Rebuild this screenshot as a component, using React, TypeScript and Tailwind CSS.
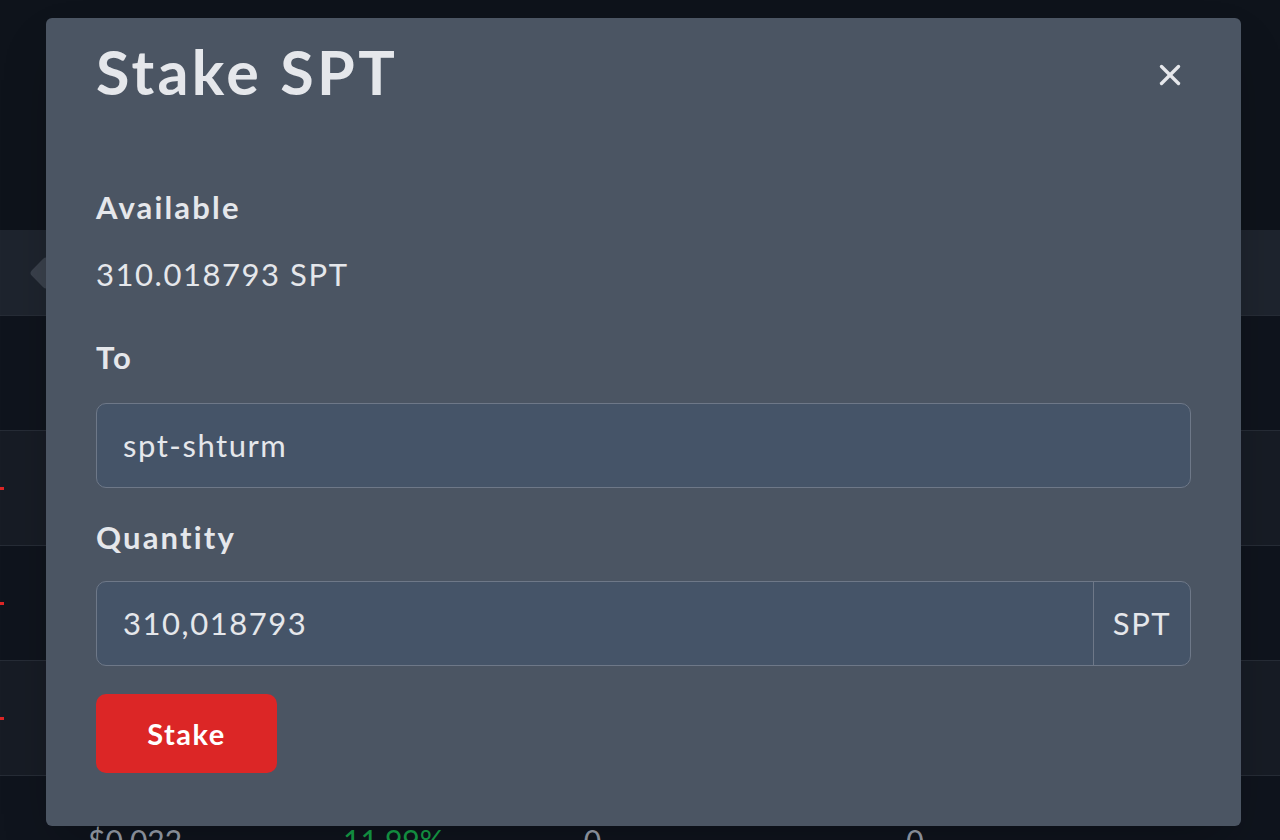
import { X } from "lucide-react";

const font = { fontFamily: "Lato, 'Open Sans', sans-serif" };

const Row = ({ light, tick }: { light?: boolean; tick?: boolean }) => {
  return (
    <div
      className={`flex h-[115px] items-center border-t border-[#262c36] ${
        light ? "bg-[#171c25]" : "bg-[#0f141d]"
      }`}
    >
      {tick && <span className="h-[3px] w-[4px] bg-[#dc2626]" />}
    </div>
  );
};

const StakeModal = () => {
  return (
    <div className="absolute left-[46px] top-[18px] flex h-[808px] w-[1195px] flex-col rounded-md bg-[#4b5563] pl-[50px] pr-[50px] pt-[24px] text-[#e5e7eb] shadow-2xl">
      <div className="flex items-center justify-between">
        <h2 className="text-[61px] font-bold leading-[60px] tracking-[0.055em]">Stake SPT</h2>
        <button className="mr-[4px] mt-[6px] text-[#e5e7eb]">
          <X size={34} strokeWidth={2.4} />
        </button>
      </div>

      <div className="mt-[87px] text-[31px] font-bold leading-[36px] tracking-[0.07em]">Available</div>
      <div className="mt-[31px] text-[31px] leading-[36px] tracking-[0.05em]">310.018793 SPT</div>

      <div className="mt-[47px] text-[31px] font-bold leading-[36px] tracking-[0.07em]">To</div>
      <div className="mt-[28px] flex h-[85px] items-center rounded-[10px] border-[1.5px] border-[#6e7888] bg-[#455468] px-[26px] text-[31px] tracking-[0.05em]">
        spt-shturm
      </div>

      <div className="mt-[31px] text-[31px] font-bold leading-[36px] tracking-[0.07em]">Quantity</div>
      <div className="mt-[26px] flex h-[85px] rounded-[10px] border-[1.5px] border-[#6e7888] bg-[#455468] text-[31px] tracking-[0.05em]">
        <div className="flex flex-1 items-center px-[26px]">310,018793</div>
        <div className="flex w-[97px] items-center justify-center border-l-[1.5px] border-[#6e7888]">
          SPT
        </div>
      </div>

      <button className="mt-[28px] flex h-[79px] w-[181px] items-center justify-center rounded-[10px] bg-[#dc2626] text-[29px] font-bold tracking-[0.05em] text-white">
        Stake
      </button>
    </div>
  );
};

export default function App() {
  return (
    <div
      className="relative h-[840px] w-[1280px] overflow-hidden bg-[#0e131b]"
      style={font}
    >
      <div className="h-[230px]" />
      <div className="flex h-[85px] items-center bg-[#1e242e]">
        <span className="ml-[34px] h-[24px] w-[24px] rotate-45 rounded-sm bg-[#3a414c]" />
      </div>
      <Row />
      <Row light tick />
      <Row tick />
      <Row light tick />
      <div className="flex h-[70px] border-t border-[#262c36] bg-[#0f141d] pt-[46px] text-[30px] leading-[36px]">
        <span className="ml-[88px] text-[#9ca3af]">$0.022</span>
        <span className="ml-[161px] text-[#16a34a]">11.99%</span>
        <span className="ml-[140px] text-[#9ca3af]">0</span>
        <span className="ml-[305px] text-[#9ca3af]">0</span>
      </div>

      <StakeModal />
    </div>
  );
}
